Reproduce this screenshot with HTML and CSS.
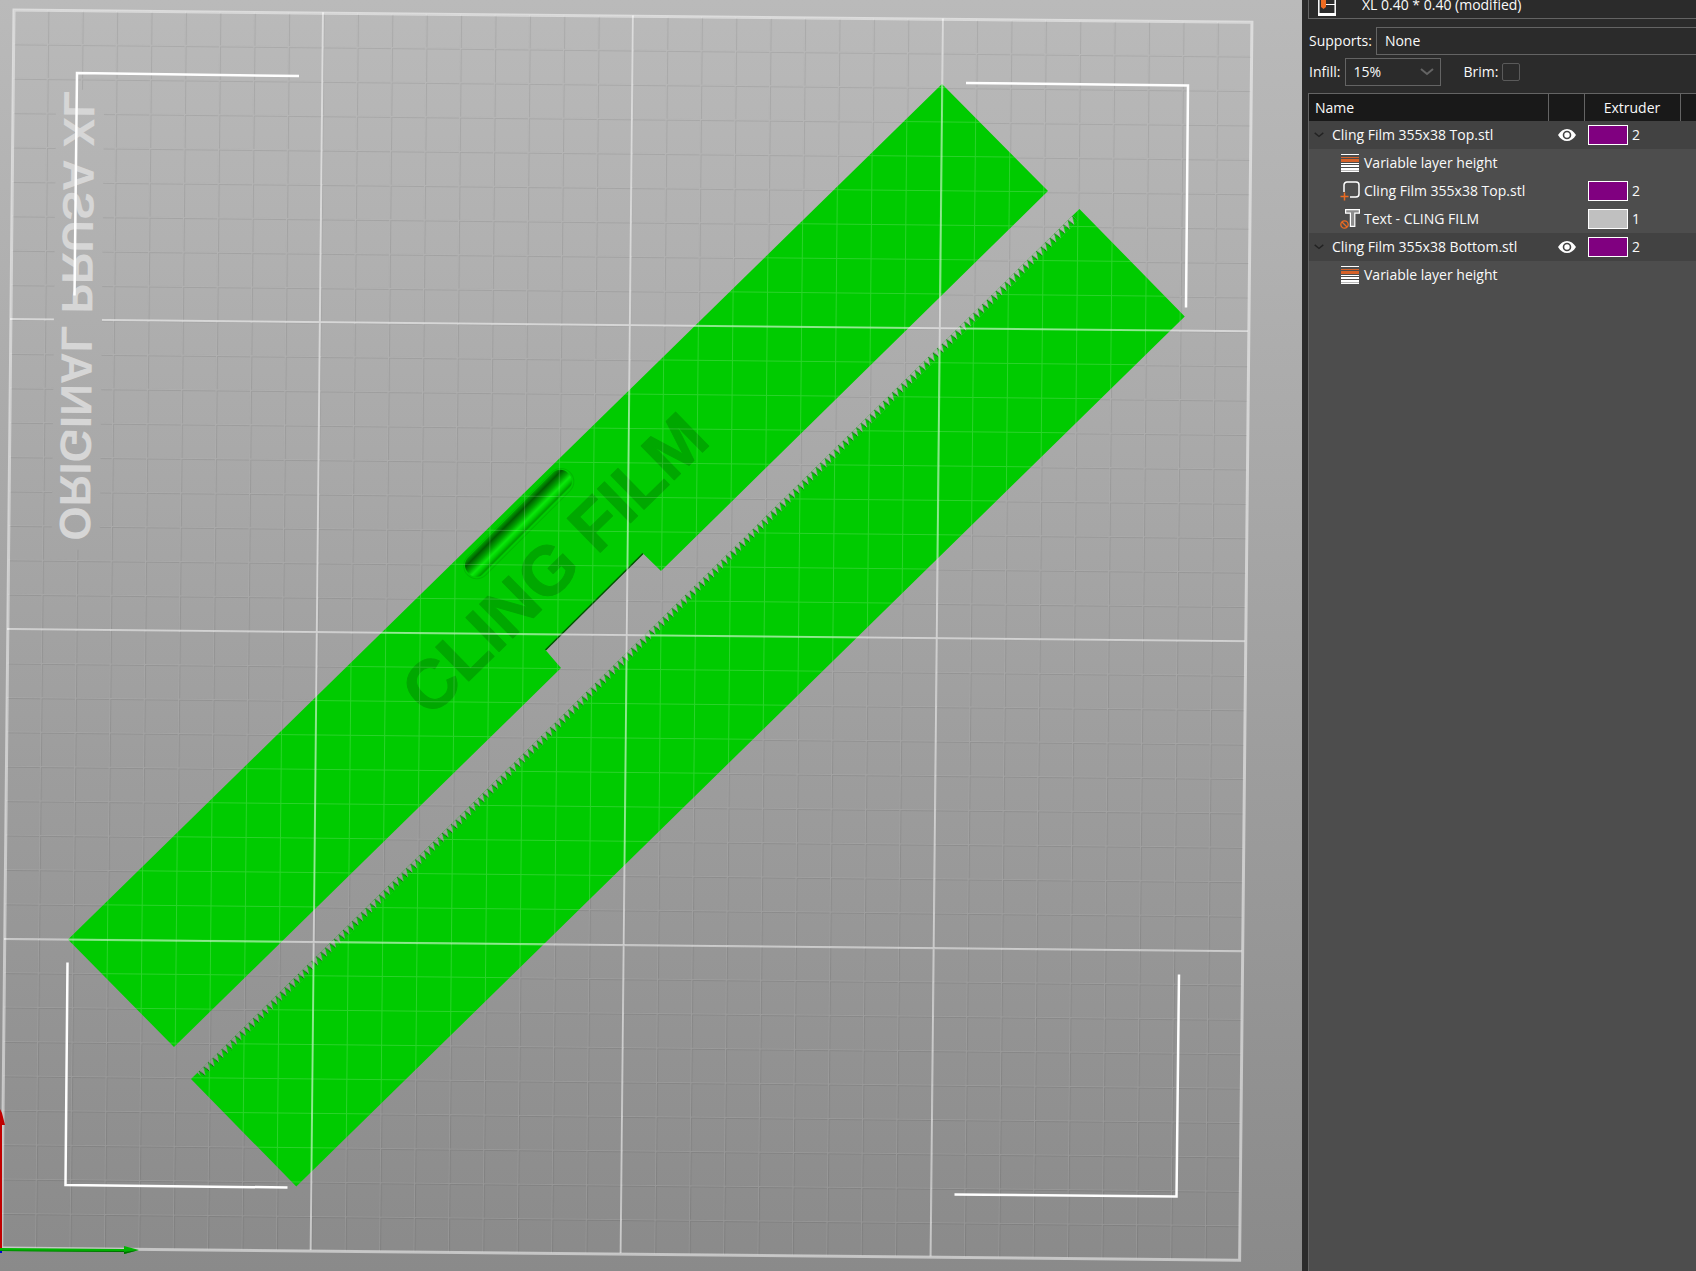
FILE: index.html
```html
<!DOCTYPE html>
<html lang="en">
<head>
<meta charset="utf-8">
<title>Slicer plater</title>
<link rel="stylesheet" href="styles.css">
</head>
<body>
<svg class="symbols" aria-hidden="true">
  <symbol id="eye" viewBox="0 0 18 12">
    <path fill="#fff" fill-rule="evenodd" d="M0 6C2.500 2 5.500 0 9 0s6.500 2 9 6c-2.500 4-5.500 6-9 6S2.500 10 0 6Zm9-4.300a4.300 4.300 0 1 0 0 8.600a4.300 4.300 0 0 0 0-8.600Zm0 1.600a2.700 2.700 0 1 1 0 5.400a2.700 2.700 0 0 1 0-5.400Z"/>
  </symbol>
  <symbol id="chevron" viewBox="0 0 14 8">
    <path fill="none" stroke="currentColor" stroke-width="2" d="M1 1l6 5 6-5"/>
  </symbol>
  <symbol id="layers" viewBox="0 0 18 18">
    <path fill="#fff" d="M0 0h18v1H0zM0 9h18v1H0zM0 11h18v2H0zM0 14h18v4H0z"/>
    <path fill="#b9b9b9" d="M0 16h18v1H0z"/>
    <path fill="#d5622a" d="M0 3h18v1H0zM0 5h18v1H0zM0 6h18v2H0z"/>
  </symbol>
  <symbol id="part" viewBox="0 0 20 20">
    <path fill="none" stroke="#fff" stroke-width="1.500" d="M4 11V4a3 3 0 0 1 3-3h9a3 3 0 0 1 3 3v9a3 3 0 0 1-3 3h-6"/>
    <path stroke="#ed6b21" stroke-width="1.500" d="M4.500 11.500v8M.5 15.500h8"/>
  </symbol>
  <symbol id="text-part" viewBox="0 0 20 20">
    <path fill="#8d8d8d" stroke="#fff" stroke-width="1.200" d="M5.600.6h13.800v3.600h-4.600v13.200h-4.400V4.200H5.600z"/>
    <circle cx="4.500" cy="15.500" r="3.700" fill="#4d4d4d" stroke="#ed6b21" stroke-width="1.300"/>
    <path stroke="#ed6b21" stroke-width="1.300" d="M2 13l5 5"/>
  </symbol>
</svg>

<div class="app">
  <main class="viewport">
    <svg class="scene" viewBox="0 0 1302 1271" preserveAspectRatio="xMinYMin slice" role="img" aria-label="Print bed with two objects">
      <defs>
        <linearGradient id="backdrop" x1="0" y1="0" x2="0" y2="1">
          <stop offset="0" stop-color="#bababa"/>
          <stop offset="1" stop-color="#8a8a8a"/>
        </linearGradient>
        <linearGradient id="groove" x1="0" y1="0" x2="0" y2="1">
          <stop offset="0" stop-color="#00a000"/>
          <stop offset=".2" stop-color="#005c00"/>
          <stop offset=".45" stop-color="#00a400"/>
          <stop offset=".65" stop-color="#0be80b"/>
          <stop offset=".8" stop-color="#00cc00"/>
          <stop offset=".93" stop-color="#009c00"/>
          <stop offset="1" stop-color="#00d000"/>
        </linearGradient>
        <pattern id="grooves" width="34.400" height="34.400" patternUnits="userSpaceOnUse">
          <path d="M0 0V34.400M0 0H34.400" fill="none" stroke="#000" stroke-opacity=".075" stroke-width="4"/>
        </pattern>
        <pattern id="minor" width="34.400" height="34.400" patternUnits="userSpaceOnUse">
          <path d="M0 .5H34.400M.5 0V34.400" fill="none" stroke="#fff" stroke-opacity=".17" stroke-width="1"/>
        </pattern>
        <pattern id="teeth" width="6.300" height="8" patternUnits="userSpaceOnUse">
          <path fill="#00cb00" d="M0 8L5 0 6.300 8z"/>
          <path stroke="#006a00" stroke-width=".8" d="M5 0L6.100 7"/>
        </pattern>
        <mask id="label-gap" maskUnits="userSpaceOnUse" x="0" y="0" width="1240" height="1240">
          <path fill="#fff" d="M0 0h1240v1240H0z"/>
          <path fill="#000" d="M44 80h48v460H44z"/>
        </mask>
      </defs>
      <path fill="url(#backdrop)" d="M0 0h1302v1271H0z"/>

      <g transform="translate(13 9) rotate(.57)">
        <path mask="url(#label-gap)" fill="url(#grooves)" d="M0 0h1239v1239H0z"/>
      </g>

      <g fill="#00cb00">
        <path d="M942 84L1048 191 661 571 643 553.500 545.500 650 561 668 174 1047 68 939.500z"/>
        <path stroke="#005500" stroke-width="1.500" d="M643 553.500L545.500 650"/>
        <g transform="translate(191 1079) rotate(-44.400)">
          <path d="M0 0H9V7.500H1234V0H1243.500V150.500H0z"/>
          <path fill="url(#teeth)" d="M9 0H1234V8H9z"/>
        </g>
        <g transform="translate(476 565) rotate(-45)">
          <rect x="-13" y="-12" width="145" height="26" rx="13" fill="none" stroke="#00b800"/>
          <rect x="-11" y="-11" width="141" height="23" rx="11" fill="url(#groove)"/>
        </g>
      </g>
      <text class="emboss" transform="translate(430 719) rotate(-44.400)">CLING FILM</text>

      <g transform="translate(13 9) rotate(.57)" fill="none">
        <path mask="url(#label-gap)" fill="url(#minor)" d="M0 0h1239v1239H0z"/>
        <g mask="url(#label-gap)" stroke="#fff" stroke-opacity=".5" stroke-width="2">
          <path d="M310 0V1238M620 0V1238M930 0V1238M0 310H1238M0 620H1238M0 930H1238"/>
        </g>
        <path stroke="#fff" stroke-opacity=".5" stroke-width="3" d="M1 1H1239V1239H1z"/>
        <text class="bed-label" transform="matrix(0 -1 -1 0 52 531)">ORIGINAL PRUSA XL</text>
      </g>

      <g fill="none" stroke="#fff" stroke-width="2.500">
        <path d="M299 76L77 73 74.500 295.500"/>
        <path d="M966 83L1188 85.500 1186 307.500"/>
        <path d="M67.500 962.500L65.500 1185 287.500 1187.500"/>
        <path d="M1179 974.500L1176.500 1196.500 954.500 1194.500"/>
      </g>
      <path fill="#c00000" d="M0 1109l2 4 3 12H2v123H0z"/>
      <path fill="#00b400" d="M0 1248l124 1v-3l15 4-15 4v-2L0 1251z"/>
      <path fill="#006f00" d="M0 1250.500l124 .5v3l15-4-15 2-124-1z"/>
      <path fill="#0000d0" d="M0 1251h2v2H0z"/>
    </svg>
  </main>

  <aside class="sidebar">
    <div class="preset">
      <svg class="preset-icon" viewBox="0 0 18 22" aria-hidden="true">
        <path fill="none" stroke="#fff" stroke-width="1.500" d="M.8 4V21M17.200 4V21"/>
        <path fill="#fff" d="M0 19h18v3H0zM8 10h9v1H8z"/>
        <path fill="#ed6b21" d="M3 4h5v9l-2.500 2L3 13z"/>
      </svg>
      <select class="preset-select" aria-label="Printer"><option>XL 0.40 * 0.40 (modified)</option></select>
    </div>

    <div class="line">
      <label for="supports">Supports:</label>
      <select id="supports" class="combo combo-wide"><option>None</option></select>
    </div>
    <div class="line">
      <label for="infill">Infill:</label>
      <span class="combo-box">
        <select id="infill" class="combo"><option>15%</option></select>
        <svg class="combo-arrow" aria-hidden="true"><use href="#chevron"/></svg>
      </span>
      <label class="brim-label" for="brim">Brim:</label>
      <input id="brim" class="check" type="checkbox">
    </div>

    <div class="objects">
      <table class="tree">
        <colgroup><col><col class="col-eye"><col class="col-extruder"><col class="col-edit"></colgroup>
        <thead>
          <tr><th class="th-name">Name</th><th></th><th>Extruder</th><th></th></tr>
        </thead>
        <tbody>
          <tr class="object">
            <td><div class="cell"><svg class="twisty"><use href="#chevron"/></svg>Cling Film 355x38 Top.stl</div></td>
            <td><svg class="eye"><use href="#eye"/></svg></td>
            <td><div class="cell extruder"><span class="swatch purple"></span>2</div></td><td></td>
          </tr>
          <tr>
            <td><div class="cell child"><svg class="icon layers"><use href="#layers"/></svg>Variable layer height</div></td>
            <td></td><td></td><td></td>
          </tr>
          <tr>
            <td><div class="cell child"><svg class="icon"><use href="#part"/></svg>Cling Film 355x38 Top.stl</div></td>
            <td></td>
            <td><div class="cell extruder"><span class="swatch purple"></span>2</div></td><td></td>
          </tr>
          <tr>
            <td><div class="cell child"><svg class="icon"><use href="#text-part"/></svg>Text - CLING FILM</div></td>
            <td></td>
            <td><div class="cell extruder"><span class="swatch silver"></span>1</div></td><td></td>
          </tr>
          <tr class="object">
            <td><div class="cell"><svg class="twisty"><use href="#chevron"/></svg>Cling Film 355x38 Bottom.stl</div></td>
            <td><svg class="eye"><use href="#eye"/></svg></td>
            <td><div class="cell extruder"><span class="swatch purple"></span>2</div></td><td></td>
          </tr>
          <tr>
            <td><div class="cell child"><svg class="icon layers"><use href="#layers"/></svg>Variable layer height</div></td>
            <td></td><td></td><td></td>
          </tr>
        </tbody>
      </table>
    </div>
  </aside>
</div>
</body>
</html>
```
FILE: styles.css
```css
* { box-sizing: border-box; }

body {
  margin: 0;
  font: 14px/20px "Open Sans", "Noto Sans", sans-serif;
  color: #fafafa;
  background: #2b2b2b;
}

.symbols { display: none; }

.app {
  display: grid;
  grid-template-columns: minmax(0, 1fr) 394px;
  height: 100vh;
  overflow: hidden;
}

.viewport { min-width: 0; min-height: 0; }

.scene { display: block; width: 100%; height: 100%; }

.emboss {
  font: bold 69px "Liberation Sans", Arial, sans-serif;
  font-kerning: none;
  fill: #00a800;
  stroke: #00a800;
  stroke-width: 1px;
  stroke-linejoin: round;
}

.bed-label {
  font: bold 44px "Liberation Sans", Arial, sans-serif;
  font-kerning: none;
  fill: #d6d6d6;
  stroke: none;
}

/* Sidebar */
.sidebar {
  display: flex;
  flex-direction: column;
  min-height: 0;
  padding-left: 6px;
  background: #2b2b2b;
}

select, input { font: inherit; color: inherit; margin: 0; }

select {
  appearance: none;
  background: none;
  border: 0;
  border-radius: 0;
  padding: 0;
}

.preset {
  display: flex;
  align-items: center;
  height: 28px;
  margin: -9px 0 8px;
  padding-left: 9px;
  border: 1px solid #646464;
  border-right: 0;
  flex: none;
}

.preset-icon { width: 18px; height: 22px; }
.preset-select { flex: 1; margin-left: 26px; }

.line {
  display: flex;
  align-items: center;
  height: 28px;
  margin-bottom: 3px;
  padding-left: 1px;
  flex: none;
}

.combo {
  width: 96px;
  height: 28px;
  padding: 0 8px;
  border: 1px solid #646464;
}

.line > label { margin-right: 4px; }
.combo-wide { flex: 1; border-right: 0; }
.combo-box { position: relative; display: flex; }

.combo-arrow {
  position: absolute;
  right: 7px;
  top: 10px;
  width: 14px;
  height: 8px;
  color: #646464;
  pointer-events: none;
}

.line > .brim-label { margin-left: 23px; }

.check {
  appearance: none;
  width: 18px;
  height: 18px;
  border: 1px solid #5a5a5a;
  border-radius: 2px;
}

/* Object list */
.objects {
  flex: 1;
  margin-top: 4px;
  border: 1px solid #646464;
  border-width: 1px 0 0 1px;
  background: #4d4d4d;
}

.tree {
  width: 100%;
  border-collapse: collapse;
  table-layout: fixed;
}

.col-eye { width: 36px; }
.col-extruder { width: 96px; }
.col-edit { width: 16px; }

th {
  height: 27px;
  padding: 0;
  font-weight: 400;
  background: #191919;
}
th + th { border-left: 1px solid #646464; }
.th-name { padding-left: 6px; text-align: left; }

td { height: 28px; padding: 0; vertical-align: middle; }
.object td { background: #424242; }

.cell {
  display: flex;
  align-items: center;
  height: 28px;
  padding-left: 5px;
  white-space: nowrap;
}
.child { padding-left: 31px; }
.extruder { padding-left: 4px; gap: 4px; }

.twisty { width: 10px; height: 6px; margin-right: 8px; color: #222; }
.icon { width: 20px; height: 20px; margin-right: 4px; }
.icon.layers { width: 18px; height: 18px; margin: 0 5px 0 1px; }
.eye { display: block; width: 18px; height: 12px; margin-left: 10px; }

.swatch { width: 40px; height: 20px; border: 1px solid #fff; }
.purple { background: #800080; }
.silver { background: #c0c0c0; }
```
